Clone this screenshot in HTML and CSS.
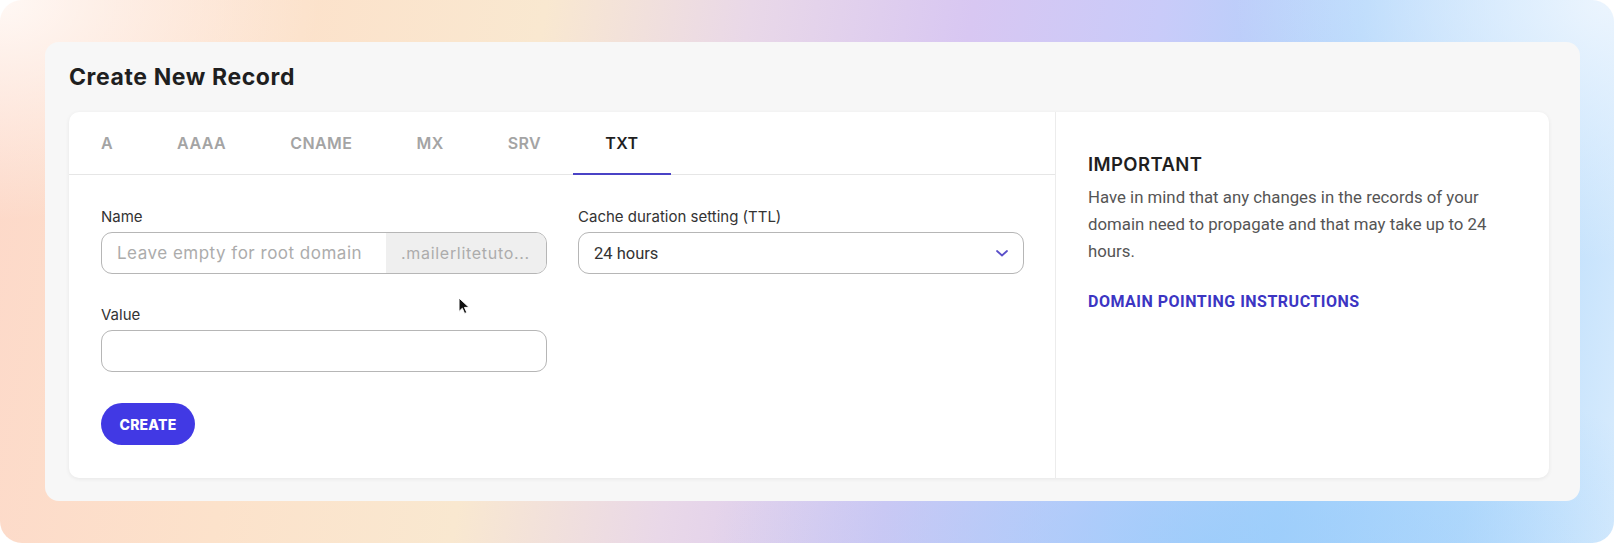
FILE: index.html
```html
<!DOCTYPE html>
<html lang="en">
<head>
<meta charset="utf-8">
<title>Create New Record</title>
<link rel="stylesheet" href="styles.css">
</head>
<body>
<div class="frame">
  <div class="panel">
    <h1 class="title">Create New Record</h1>
    <div class="card">
      <div class="main">
        <nav class="tabs">
          <span class="tab">A</span>
          <span class="tab">AAAA</span>
          <span class="tab">CNAME</span>
          <span class="tab">MX</span>
          <span class="tab">SRV</span>
          <span class="tab active">TXT</span>
        </nav>
        <form class="form">
          <div class="field">
            <label class="label">Name</label>
            <div class="input split">
              <span class="placeholder">Leave empty for root domain</span>
              <span class="suffix">.mailerlitetuto...</span>
            </div>
          </div>
          <div class="field">
            <label class="label">Cache duration setting (TTL)</label>
            <div class="input select">
              <span class="value">24 hours</span>
              <svg class="chevron" width="12" height="7" viewBox="0 0 12 7"><path d="M1 1l5 4.5L11 1" fill="none" stroke="#5a4fc9" stroke-width="1.8" stroke-linecap="round" stroke-linejoin="round"/></svg>
            </div>
          </div>
          <div class="field">
            <label class="label">Value</label>
            <div class="input"></div>
          </div>
          <div class="field"></div>
          <div class="actions">
            <button type="button" class="btn">CREATE</button>
          </div>
          <svg class="cursor" width="12" height="18" viewBox="0 0 12 18"><path d="M1 1v13.5l3.3-3.2 2.3 5.2 2.2-1-2.3-5.1h4.6z" fill="#111" stroke="#fff" stroke-width="1" stroke-linejoin="round"/></svg>
        </form>
      </div>
      <aside class="side">
        <h2 class="side-title">IMPORTANT</h2>
        <p class="side-text">Have in mind that any changes in the records of your domain need to propagate and that may take up to 24 hours.</p>
        <a class="side-link" href="#">DOMAIN POINTING INSTRUCTIONS</a>
      </aside>
    </div>
  </div>
</div>
</body>
</html>
```

FILE: styles.css
```css
html, body {
  margin: 0;
  padding: 0;
  background: #ffffff;
}

.frame {
  box-sizing: border-box;
  width: 1614px;
  height: 543px;
  border-radius: 22px;
  padding: 42px 34px 42px 45px;
  background:
    radial-gradient(ellipse 320px 220px at 0% 0%, rgba(255,250,247,0.95), rgba(255,250,247,0)),
    radial-gradient(ellipse 380px 260px at 100% 0%, rgba(238,246,254,0.95), rgba(238,246,254,0)),
    radial-gradient(ellipse 500px 200px at 75% 100%, rgba(150,204,251,0.7), rgba(150,204,251,0)),
    linear-gradient(100deg, #fdd8c9 0%, #fce2cb 18%, #f9e8d0 32%, #e9d8e8 44%, #d8c7f2 57%, #c9cbf9 68%, #abd2fb 80%, #b9dcfc 91%, #d9ecfd 100%);
  font-family: "Inter", "Roboto", sans-serif;
}

.panel {
  box-sizing: border-box;
  height: 100%;
  background: #f7f7f7;
  border-radius: 14px;
  padding: 20px 31px 23px 24px;
  display: flex;
  flex-direction: column;
}

.title {
  margin: 0 0 20px 0;
  font-family: "Inter", sans-serif;
  font-weight: 700;
  font-size: 23px;
  line-height: 30px;
  color: #1f1f1f;
  letter-spacing: 0.6px;
}

.card {
  flex: 1;
  background: #ffffff;
  border-radius: 10px;
  box-shadow: 0 1px 4px rgba(0,0,0,0.07);
  display: grid;
  grid-template-columns: 987px 1fr;
}

.main {
  border-right: 1px solid #ececec;
  display: flex;
  flex-direction: column;
}

.tabs {
  display: flex;
  height: 62px;
  border-bottom: 1px solid #e6e6e6;
}

.tab {
  position: relative;
  display: flex;
  align-items: center;
  padding: 0 32px;
  font-family: "Inter", sans-serif;
  font-weight: 600;
  font-size: 16px;
  letter-spacing: 0.45px;
  color: #a4a4a4;
}

.tab.active {
  color: #1f1f1f;
}

.tab.active::after {
  content: "";
  position: absolute;
  left: 0;
  right: 0;
  bottom: -1px;
  height: 2px;
  background: #4a43c6;
}

.form {
  position: relative;
  display: grid;
  grid-template-columns: 446px 446px;
  column-gap: 31px;
  row-gap: 31px;
  padding: 32px 32px 32px 32px;
}

.field {
  display: flex;
  flex-direction: column;
  gap: 5px;
}

.label {
  font-family: "Inter", sans-serif;
  font-size: 15px;
  line-height: 20px;
  color: #333333;
}

.input {
  box-sizing: border-box;
  height: 42px;
  border: 1.5px solid #b6b6b6;
  border-radius: 11px;
  background: #ffffff;
  display: flex;
  align-items: center;
  overflow: hidden;
}

.split .placeholder {
  flex: 1;
  padding-left: 15px;
  font-family: "Inter", sans-serif;
  font-size: 17px;
  letter-spacing: 0.5px;
  color: #acacac;
  white-space: nowrap;
  overflow: hidden;
}

.split .suffix {
  box-sizing: border-box;
  width: 160px;
  flex: none;
  height: 100%;
  background: #efefef;
  display: flex;
  align-items: center;
  padding-left: 15px;
  font-family: "Inter", sans-serif;
  font-size: 16px;
  letter-spacing: 0.7px;
  color: #acacac;
  white-space: nowrap;
  overflow: hidden;
}

.select {
  justify-content: space-between;
  padding: 0 15px 0 15px;
}

.select .value {
  font-family: "Roboto", sans-serif;
  font-size: 16.5px;
  color: #333333;
}

.chevron {
  display: block;
}

.actions {
  grid-column: 1 / -1;
  display: flex;
}

.btn {
  width: 94px;
  height: 42px;
  border: none;
  border-radius: 21px;
  background: #4139e4;
  color: #ffffff;
  font-family: "Inter", sans-serif;
  font-weight: 800;
  font-size: 14px;
  letter-spacing: 0.2px;
  padding: 0;
}

.cursor {
  position: absolute;
  left: 389px;
  top: 122px;
}

.side {
  padding: 40px 32px 0 32px;
}

.side-title {
  margin: 0 0 8px 0;
  font-family: "Inter", sans-serif;
  font-weight: 600;
  font-size: 18.5px;
  line-height: 24px;
  letter-spacing: 0.4px;
  color: #1f1f1f;
}

.side-text {
  margin: 0 0 27px 0;
  font-family: "Roboto", sans-serif;
  font-size: 16.8px;
  line-height: 27px;
  color: #555555;
}

.side-link {
  display: block;
  font-family: "Roboto", sans-serif;
  font-weight: 700;
  font-size: 16px;
  line-height: 20px;
  letter-spacing: 0.5px;
  color: #3c35c3;
  text-decoration: none;
}
```
